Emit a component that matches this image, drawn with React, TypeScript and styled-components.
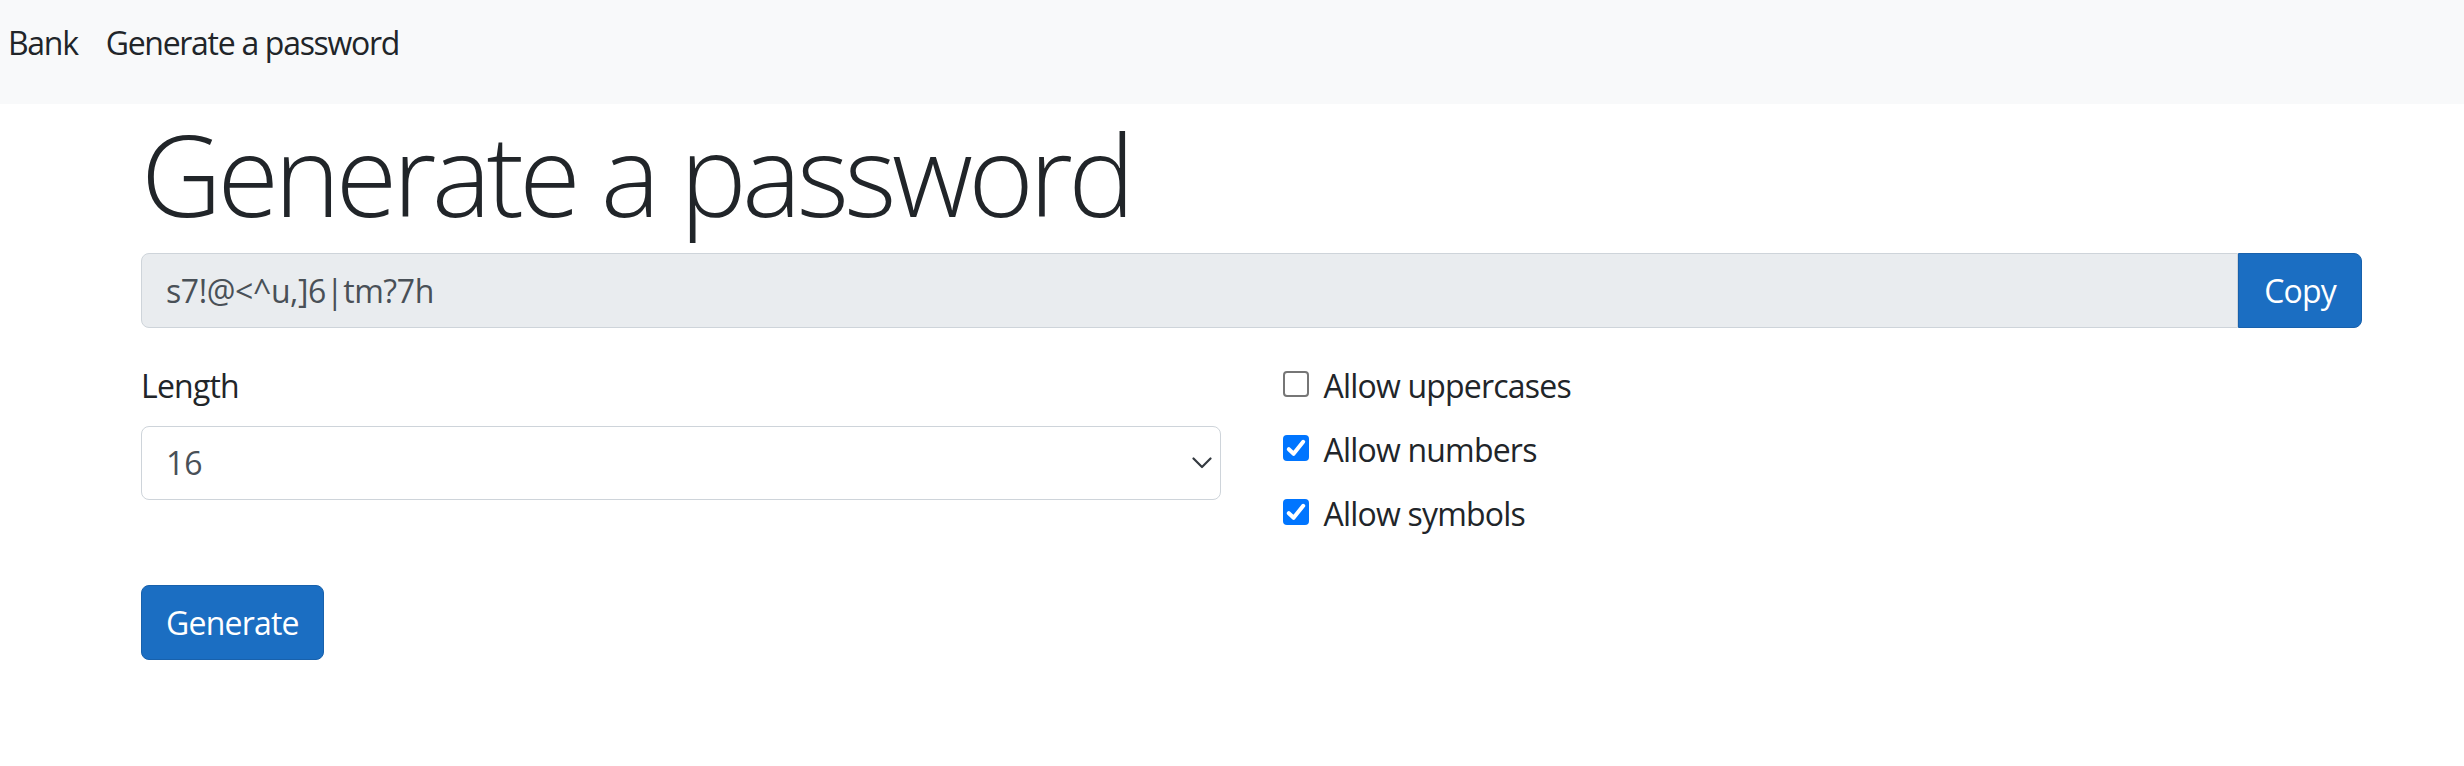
import React, { useState } from "react";
import styled, { createGlobalStyle } from "styled-components";

const Global = createGlobalStyle`
  html, body { margin: 0; padding: 0; background: #ffffff; }
  body {
    font-family: "Open Sans", "Noto Sans", sans-serif;
    font-size: 32px;
    line-height: 1.5;
    letter-spacing: -0.8px;
    color: #212529;
  }
  * { box-sizing: border-box; }
`;

const NavBar = styled.nav`
  height: 104px;
  background: #f8f9fa;
  display: flex;
  align-items: flex-start;
  gap: 28px;
  padding: 19px 0 0 8px;
`;

const NavItem = styled.a`
  color: #212529;
  text-decoration: none;
  font-size: 32px;
  line-height: 48px;
  letter-spacing: -1.3px;
`;

const Main = styled.main`
  padding: 0 102px 0 141px;
`;

const Title = styled.h1`
  margin: 3px 0 12px;
  font-size: 112px;
  font-weight: 300;
  line-height: 1.2;
  letter-spacing: -4.6px;
  color: #212529;
`;

const InputGroup = styled.div`
  display: flex;
  height: 75px;
`;

const PasswordField = styled.input`
  flex: 1;
  min-width: 0;
  height: 100%;
  background: #e9ecef;
  border: 1px solid #ced4da;
  border-radius: 8px 0 0 8px;
  padding: 0 24px;
  font: inherit;
  font-size: 32px;
  letter-spacing: -0.4px;
  color: #495057;
  outline: none;
`;

const Button = styled.button<{ $joined?: boolean }>`
  height: 75px;
  padding: 0 ${(p) => (p.$joined ? "25px" : "24px")};
  background: #1b6ec2;
  border: 1px solid #1861ac;
  border-radius: ${(p) => (p.$joined ? "0 8px 8px 0" : "8px")};
  color: #ffffff;
  font: inherit;
  font-size: 32px;
  line-height: 48px;
  letter-spacing: -0.8px;
  cursor: pointer;
`;

const Options = styled.div`
  display: grid;
  grid-template-columns: 1fr 1fr;
  column-gap: 62px;
  margin: 34px 0 47px;
  align-items: start;
`;

const Column = styled.div`
  display: flex;
  flex-direction: column;
`;

const FieldLabel = styled.label`
  display: block;
  line-height: 48px;
  margin-bottom: 16px;
`;

const SelectWrap = styled.div`
  position: relative;
  height: 74px;
`;

const Select = styled.select`
  appearance: none;
  -webkit-appearance: none;
  width: 100%;
  height: 100%;
  background: #ffffff;
  border: 1px solid #ced4da;
  border-radius: 8px;
  padding: 0 24px;
  font: inherit;
  font-size: 32px;
  color: #495057;
  outline: none;
`;

const Chevron = styled.svg`
  position: absolute;
  right: 9px;
  top: 50%;
  transform: translateY(-50%);
  pointer-events: none;
`;

const CheckRow = styled.label`
  display: flex;
  align-items: flex-start;
  line-height: 48px;
  margin-bottom: 16px;
  cursor: pointer;
  &:last-child { margin-bottom: 0; }
`;

const Box = styled.span<{ $on: boolean }>`
  flex: none;
  width: 26px;
  height: 26px;
  margin: 9px 15px 0 0;
  border-radius: 4px;
  background: ${(p) => (p.$on ? "#0075ff" : "#ffffff")};
  border: ${(p) => (p.$on ? "none" : "2px solid #767676")};
  display: flex;
  align-items: center;
  justify-content: center;
`;

const HiddenInput = styled.input`
  display: none;
`;

function Check({ label, initial }: { label: string; initial: boolean }) {
  const [on, setOn] = useState(initial);
  return (
    <CheckRow>
      <HiddenInput type="checkbox" checked={on} onChange={() => setOn(!on)} />
      <Box $on={on}>
        {on && (
          <svg width="26" height="26" viewBox="0 0 26 26">
            <path
              d="M5.8 14.2 L10.6 18.8 L20.2 6.8"
              fill="none"
              stroke="#ffffff"
              strokeWidth="4"
              strokeLinecap="round"
              strokeLinejoin="round"
            />
          </svg>
        )}
      </Box>
      {label}
    </CheckRow>
  );
}

export default function App() {
  const [length, setLength] = useState("16");
  return (
    <>
      <Global />
      <NavBar>
        <NavItem href="#">Bank</NavItem>
        <NavItem href="#">Generate a password</NavItem>
      </NavBar>
      <Main>
        <Title>Generate a password</Title>
        <InputGroup>
          <PasswordField readOnly value="s7!@<^u,]6|tm?7h" />
          <Button $joined>Copy</Button>
        </InputGroup>
        <Options>
          <Column>
            <FieldLabel htmlFor="length">Length</FieldLabel>
            <SelectWrap>
              <Select id="length" value={length} onChange={(e) => setLength(e.target.value)}>
                {[8, 10, 12, 14, 16, 20, 24, 32].map((n) => (
                  <option key={n} value={String(n)}>
                    {n}
                  </option>
                ))}
              </Select>
              <Chevron width="20" height="12" viewBox="0 0 20 12">
                <path d="M1.5 1.5 L10 10 L18.5 1.5" fill="none" stroke="#343a40" strokeWidth="2.2" strokeLinecap="round" strokeLinejoin="round" />
              </Chevron>
            </SelectWrap>
          </Column>
          <Column>
            <Check label="Allow uppercases" initial={false} />
            <Check label="Allow numbers" initial={true} />
            <Check label="Allow symbols" initial={true} />
          </Column>
        </Options>
        <Button>Generate</Button>
      </Main>
    </>
  );
}
